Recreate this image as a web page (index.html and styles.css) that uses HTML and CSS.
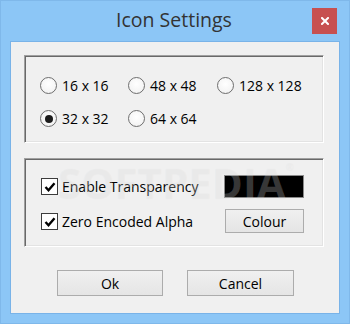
FILE: index.html
```html
<!DOCTYPE html>
<html lang="en">
<head>
<meta charset="utf-8">
<title>Icon Settings</title>
<link rel="stylesheet" href="styles.css">
</head>
<body>
<div class="window">
  <div class="titlebar">
    <span class="title">Icon Settings</span>
    <div class="close" aria-label="Close">
      <svg width="8" height="8" viewBox="0 0 8 8"><path d="M1 1 L7 7 M7 1 L1 7" stroke="#fff" stroke-width="2" stroke-linecap="square" fill="none"/></svg>
    </div>
  </div>
  <div class="client">
    <div class="group sizes">
      <label class="opt"><span class="radio"></span><span>16 x 16</span></label>
      <label class="opt"><span class="radio"></span><span>48 x 48</span></label>
      <label class="opt"><span class="radio"></span><span>128 x 128</span></label>
      <label class="opt"><span class="radio checked"></span><span>32 x 32</span></label>
      <label class="opt"><span class="radio"></span><span>64 x 64</span></label>
    </div>
    <div class="group options">
      <div class="row">
        <label class="opt"><span class="check"><svg width="14" height="14" viewBox="0 0 14 14"><path d="M2.5 7 L5.5 10.2 L11.5 3.2" stroke="#000" stroke-width="2.4" fill="none"/></svg></span><span>Enable Transparency</span></label>
        <div class="swatch"></div>
      </div>
      <div class="row">
        <label class="opt"><span class="check"><svg width="14" height="14" viewBox="0 0 14 14"><path d="M2.5 7 L5.5 10.2 L11.5 3.2" stroke="#000" stroke-width="2.4" fill="none"/></svg></span><span>Zero Encoded Alpha</span></label>
        <div class="btn colour">Colour</div>
      </div>
    </div>
    <div class="actions">
      <div class="btn ok">Ok</div>
      <div class="btn cancel">Cancel</div>
    </div>
    <div class="watermark">SOFTPEDIA<sup>®</sup></div>
  </div>
</div>
</body>
</html>
```
FILE: styles.css
```css
* { box-sizing: border-box; }
html, body { margin: 0; padding: 0; }
body {
  width: 350px;
  height: 324px;
  overflow: hidden;
  font-family: "Open Sans", "Noto Sans", sans-serif;
  font-size: 14px;
  color: #000;
}
.window {
  width: 350px;
  height: 324px;
  background: #8cc6f6;
  border: 1px solid #7fb8ea;
  padding: 40px 9px 9px 9px;
  display: flex;
  flex-direction: column;
  position: relative;
}
.titlebar {
  position: absolute;
  left: 0;
  top: 0;
  width: 348px;
  height: 40px;
  display: grid;
  grid-template-columns: 1fr auto 1fr;
}
.title {
  grid-column: 2;
  font-size: 19.5px;
  line-height: 26px;
  padding-top: 6px;
  color: #333;
  margin-left: -2px;
}
.close {
  grid-column: 3;
  justify-self: end;
  margin-top: 7px;
  margin-right: 12px;
  width: 25px;
  height: 26px;
  background: #c75050;
  display: flex;
  align-items: center;
  justify-content: center;
}
.close svg { display: block; }
.client {
  flex: 1;
  background: #f0f0f0;
  border: 1px solid #79b3e8;
  padding: 13px 15px 0 13px;
  position: relative;
}
.group {
  width: 300px;
  border-top: 1px solid #a0a0a0;
  border-left: 1px solid #a0a0a0;
  border-right: 1px solid #ffffff;
  border-bottom: 1px solid #ffffff;
  box-shadow: inset 1px 1px 0 #696969, inset -1px -1px 0 #e3e3e3;
}
.sizes {
  height: 88px;
  padding: 13px 0 0 15px;
  display: grid;
  grid-template-columns: 88px 89px 90px;
  grid-auto-rows: 33px;
}
.opt {
  display: flex;
  align-items: center;
  white-space: nowrap;
  line-height: 19px;
}
.radio {
  width: 17px;
  height: 17px;
  border-radius: 50%;
  border: 1px solid #6e6e6e;
  background: radial-gradient(circle at 50% 40%, #ffffff 0%, #f4f4f4 70%, #e6e6e6 100%);
  margin-right: 5px;
  flex: none;
  display: flex;
  align-items: center;
  justify-content: center;
}
.radio.checked::after {
  content: "";
  width: 8px;
  height: 8px;
  border-radius: 50%;
  background: #1c1c1c;
}
.options {
  height: 89px;
  margin-top: 15px;
  padding: 10px 19px 0 16px;
  display: flex;
  flex-direction: column;
}
.row {
  height: 35px;
  display: flex;
  align-items: center;
  justify-content: space-between;
}
.check {
  width: 17px;
  height: 17px;
  border: 1px solid #3c3c3c;
  background: #fff;
  margin-right: 4px;
  flex: none;
  display: flex;
  align-items: center;
  justify-content: center;
}
.check svg { display: block; }
.swatch {
  width: 80px;
  height: 23px;
  background: #000;
  border: 1px solid #8a8a8a;
}
.btn {
  border: 1px solid #acacac;
  background: linear-gradient(#f0f0f0, #e5e5e5);
  display: flex;
  align-items: center;
  justify-content: center;
  line-height: 19px;
}
.colour {
  width: 79px;
  height: 24px;
  margin-bottom: 1px;
}
.actions {
  margin-top: 23px;
  display: flex;
  gap: 24px;
  padding-left: 33px;
}
.ok { width: 106px; height: 26px; }
.cancel { width: 107px; height: 26px; }
.watermark {
  position: absolute;
  left: 47px;
  top: 120px;
  font-family: "Open Sans", sans-serif;
  font-weight: 700;
  font-size: 42px;
  line-height: 42px;
  color: rgba(255, 255, 255, 0.22);
  text-shadow: 0 0 1px rgba(0, 0, 0, 0.05);
  pointer-events: none;
  white-space: nowrap;
}
.watermark sup {
  font-size: 10px;
  vertical-align: top;
  line-height: 10px;
}
```
